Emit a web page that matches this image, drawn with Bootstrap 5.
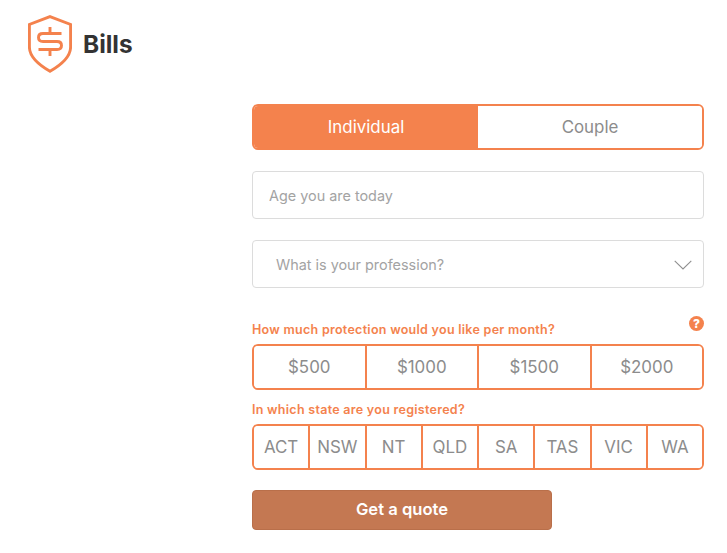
<!DOCTYPE html>
<html lang="en">
<head>
<meta charset="utf-8">
<title>Bills</title>
<link href="https://cdn.jsdelivr.net/npm/bootstrap@5.3.0/dist/css/bootstrap.min.css" rel="stylesheet">
<style>
:root { --brand: #f4824d; }
html, body { height: 100%; }
body { font-family: Inter, "Liberation Sans", sans-serif; background: #fff; color: #8c8c8c; overflow: hidden; }
.brand-bar { padding: 15px 0 0 28px; height: 104px; gap: 11px; }
.brand-name { font-size: 24.4px; line-height: 58px; font-weight: 700; color: #333; margin: 0; }
.quote-form { width: 452px; margin-left: 252px; }
.seg-group { display: flex; border: 2px solid var(--brand); border-radius: 6px; overflow: hidden; background: #fff; }
.seg-btn { flex: 1 1 0; min-width: 0; padding: 2px 0 0; border: 0; border-radius: 0; background: #fff; color: #8c8c8c; font-size: 16.9px; font-weight: 400; border-left: 2px solid var(--brand); text-align: center; }
.seg-btn:first-child { border-left: 0; }
.seg-btn.is-active { background: var(--brand); color: #fff; }
.seg-btn.is-active:hover { background: var(--brand); color: #fff; }
.seg-btn.is-active + .seg-btn { border-left: 0; }
.seg-type, .seg-amount, .seg-state { height: 46px; }
.field-box { height: 48px; border: 1px solid #dcdcdc; border-radius: 4px; font-size: 14.4px; color: #999; box-shadow: none; }
.field-box::placeholder { color: #a3a3a3; opacity: 1; }
.age-field { margin-top: 21px; padding: 0 16px; }
.job-field { margin-top: 21px; padding: 2px 11px 0 23px; }
.job-field span { color: #a3a3a3; }
.question { font-size: 12.5px; font-weight: 600; color: var(--brand); margin: 0; line-height: 16px; letter-spacing: .28px; }
.ask-row { margin-top: 26px; height: 30px; align-items: flex-end; padding-bottom: 6px; }
.help-dot { width: 15px; height: 15px; border-radius: 50%; background: var(--brand); color: #fff; font-size: 12px; font-weight: 800; line-height: 15px; text-align: center; letter-spacing: 0; position: relative; top: -7px; }
.ask-row-two { margin-top: 12px; margin-bottom: 6px; }
.quote-btn { display: block; width: 300px; height: 40px; margin-top: 20px; padding: 0 0 2px; background: #c47852; border: 1px solid #b96f4a; border-radius: 4px; color: #fff; font-size: 16.6px; font-weight: 600; }
</style>
</head>
<body>
<header class="brand-bar d-flex align-items-start">
  <svg width="44" height="58" viewBox="0 0 44 58" fill="none" stroke="#f4824d" stroke-width="2.9" aria-hidden="true">
    <path d="M22 1.6 L42.6 9.4 V32 C42.6 42 33 50 22 56.3 C11 50 1.4 42 1.4 32 V9.4 Z"/>
    <path d="M33.5 18.5 H15 C12 18.5 10.5 20.2 10.5 22.5 C10.5 24.8 12 26.5 15 26.5 H29 C32 26.5 33.5 28.2 33.5 30.5 C33.5 32.8 32 34.5 29 34.5 H10.5 M22 12 V18.5 M22 34.5 V41"/>
  </svg>
  <p class="brand-name align-self-start">Bills</p>
</header>
<main class="quote-form">
  <div class="seg-group seg-type" role="group">
    <button type="button" class="btn seg-btn is-active">Individual</button>
    <button type="button" class="btn seg-btn">Couple</button>
  </div>
  <input type="text" class="form-control field-box age-field" placeholder="Age you are today">
  <div class="field-box job-field d-flex align-items-center justify-content-between">
    <span>What is your profession?</span>
    <svg width="18" height="10" viewBox="0 0 18 10" fill="none" stroke="#8f8f8f" stroke-width="1.1" aria-hidden="true"><path d="M.7 .8 9 9 17.3 .8"/></svg>
  </div>
  <div class="ask-row d-flex justify-content-between">
    <p class="question">How much protection would you like per month?</p>
    <span class="help-dot">?</span>
  </div>
  <div class="seg-group seg-amount" role="group">
    <button type="button" class="btn seg-btn">$500</button>
    <button type="button" class="btn seg-btn">$1000</button>
    <button type="button" class="btn seg-btn">$1500</button>
    <button type="button" class="btn seg-btn">$2000</button>
  </div>
  <p class="question ask-row-two">In which state are you registered?</p>
  <div class="seg-group seg-state" role="group">
    <button type="button" class="btn seg-btn">ACT</button>
    <button type="button" class="btn seg-btn">NSW</button>
    <button type="button" class="btn seg-btn">NT</button>
    <button type="button" class="btn seg-btn">QLD</button>
    <button type="button" class="btn seg-btn">SA</button>
    <button type="button" class="btn seg-btn">TAS</button>
    <button type="button" class="btn seg-btn">VIC</button>
    <button type="button" class="btn seg-btn">WA</button>
  </div>
  <button type="button" class="btn quote-btn">Get a quote</button>
</main>
<script src="https://cdn.jsdelivr.net/npm/bootstrap@5.3.0/dist/js/bootstrap.bundle.min.js"></script>
</body>
</html>
